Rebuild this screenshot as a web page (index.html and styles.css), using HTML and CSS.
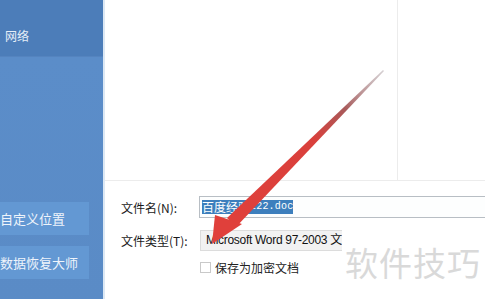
FILE: index.html
```html
<!DOCTYPE html>
<html lang="zh-CN">
<head>
<meta charset="utf-8">
<title>另存为</title>
<link rel="stylesheet" href="styles.css">
</head>
<body>
<div class="app">
  <aside class="sidebar">
    <div class="side-top">
      <div class="side-item">网络</div>
    </div>
    <div class="side-bottom">
      <div class="side-btn">自定义位置</div>
      <div class="side-btn">数据恢复大师</div>
    </div>
  </aside>
  <main class="main">
    <div class="browser">
      <div class="file-list"></div>
      <div class="preview"></div>
    </div>
    <div class="form">
      <div class="row row-name">
        <span class="label">文件名(N):</span>
        <div class="input"><span class="sel"><span class="cjk">百度经验</span><span class="mono">222.doc</span></span></div>
      </div>
      <div class="row row-type">
        <span class="label">文件类型(T):</span>
        <div class="select">Microsoft Word 97-2003 文</div>
      </div>
      <div class="row row-check">
        <span class="box"></span>
        <span class="check-label">保存为加密文档</span>
      </div>
    </div>
  </main>
</div>
<div class="watermark">软件技巧</div>
<svg class="arrow" width="485" height="299" viewBox="0 0 485 299">
  <defs>
    <linearGradient id="shaftGrad" x1="383" y1="70" x2="230" y2="225" gradientUnits="userSpaceOnUse">
      <stop offset="0" stop-color="#b9b0b4" stop-opacity="0.6"/>
      <stop offset="0.25" stop-color="#a85a5a"/>
      <stop offset="0.45" stop-color="#d9403c"/>
      <stop offset="1" stop-color="#e0403b"/>
    </linearGradient>
  </defs>
  <polygon points="383,70 384,71 236,227 227,218" fill="url(#shaftGrad)"/>
  <polygon points="212,244 215,215 242,224" fill="#e0403b"/>
</svg>
</body>
</html>
```

FILE: styles.css
```css
html, body {
  margin: 0;
  padding: 0;
  width: 485px;
  height: 299px;
  overflow: hidden;
  background: #ffffff;
  font-family: "Noto Sans CJK SC", "Noto Sans", sans-serif;
  position: relative;
}

.app {
  display: flex;
  width: 485px;
  height: 299px;
}

.sidebar {
  width: 103px;
  flex: none;
  display: flex;
  flex-direction: column;
  border-right: 2px solid #dce8f4;
  background: #5a8bc6;
}

.side-top {
  height: 57px;
  background: #4c7db9;
  box-sizing: border-box;
  padding-top: 28px;
  border-bottom: 1px solid #5584bf;
}

.side-item {
  color: #e6eef8;
  font-size: 12px;
  line-height: 16px;
  padding-left: 5px;
}

.side-bottom {
  flex: 1;
  display: flex;
  flex-direction: column;
  padding-top: 145px;
  gap: 11px;
  background: linear-gradient(180deg, #5b8dc9 0%, #5a8bc6 100%);
}

.side-btn {
  width: 89px;
  height: 33px;
  background: #6398d3;
  color: #eef4fb;
  font-size: 13px;
  line-height: 33px;
  white-space: nowrap;
  padding-left: 0;
}

.main {
  flex: 1;
  display: flex;
  flex-direction: column;
  min-width: 0;
}

.browser {
  height: 180px;
  display: flex;
  border-bottom: 1px solid #ececec;
  flex: none;
}

.file-list {
  width: 292px;
  flex: none;
}

.preview {
  flex: 1;
  border-left: 1px solid #ececec;
}

.form {
  padding: 15px 0 0 16px;
  display: flex;
  flex-direction: column;
  font-size: 12px;
  color: #1a1a1a;
}

.row {
  display: flex;
  align-items: center;
}

.label {
  width: 78px;
  flex: none;
  font-size: 12px;
  white-space: nowrap;
}

.input {
  flex: 1;
  height: 20px;
  border: 1px solid #b8bec4;
  border-right: none;
  display: flex;
  align-items: center;
  padding-left: 2px;
  background: #fdfefe;
}

.sel {
  background: #3d7fbd;
  color: #ffffff;
  height: 14px;
  display: flex;
  align-items: center;
  line-height: 14px;
}

.sel .cjk {
  font-size: 12px;
}

.sel .mono {
  font-family: "Liberation Mono", monospace;
  font-size: 10px;
  letter-spacing: 0.2px;
}

.row-type {
  margin-top: 12px;
}

.row-type .label {
  width: 79px;
}

.select {
  width: 136px;
  height: 19px;
  border: 1px solid #dcdcdc;
  border-right: none;
  background: #f2f2f2;
  font-family: "Liberation Sans", "Noto Sans CJK SC", sans-serif;
  font-size: 12px;
  line-height: 19px;
  padding-left: 5px;
  white-space: nowrap;
  overflow: hidden;
  color: #111;
  letter-spacing: -0.3px;
}

.row-check {
  margin-top: 8px;
  padding-left: 79px;
}

.box {
  width: 9px;
  height: 9px;
  border: 1px solid #c9c9c9;
  background: #fff;
  flex: none;
}

.check-label {
  margin-left: 4px;
  font-size: 12px;
  color: #222;
}

.watermark {
  position: absolute;
  left: 345px;
  top: 240px;
  font-size: 33px;
  line-height: 44px;
  color: #d9d9d9;
  letter-spacing: 1px;
  white-space: nowrap;
}

.arrow {
  position: absolute;
  left: 0;
  top: 0;
  pointer-events: none;
}
```
